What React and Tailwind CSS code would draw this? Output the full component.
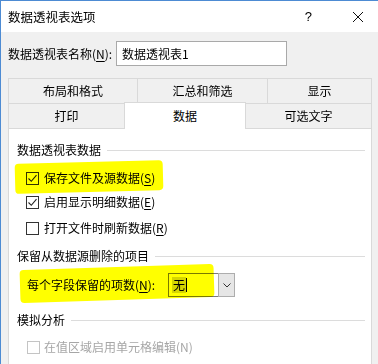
import React from 'react';

const Check = ({ checked, disabled }) => (
  <span
    className={`w-[13px] h-[13px] border bg-white flex items-center justify-center shrink-0 ${
      disabled ? 'border-[#c4c4c4]' : 'border-[#333333]'
    }`}
  >
    {checked && (
      <svg width="11" height="11" viewBox="0 0 11 11">
        <path d="M1.5 5.5 L4.3 8.3 L9.5 2.2" fill="none" stroke="#222" strokeWidth="1.1" />
      </svg>
    )}
  </span>
);

const U = ({ children }) => <span className="underline underline-offset-2">{children}</span>;

const GroupHeader = ({ children, className = '' }) => (
  <div className={`flex items-center gap-[6px] pr-[6px] ${className}`}>
    <span className="text-black whitespace-nowrap">{children}</span>
    <div className="flex-1 h-px bg-[#dcdcdc]" />
  </div>
);

const Tab = ({ children, className = '' }) => (
  <div className={`flex items-center justify-center border-t border-l border-[#d9d9d9] bg-[#f0f0f0] text-black ${className}`}>
    {children}
  </div>
);

export default function App() {
  return (
    <div className="w-[378px] h-[364px] overflow-hidden bg-[#f0f0f0] border-l border-t border-[#4d8bd3] font-['Noto_Sans_CJK_SC',sans-serif] text-[12px] leading-[16px] text-black">
      {/* title bar */}
      <div className="h-[31px] bg-white flex items-center pl-[7px]">
        <span className="text-[12.5px]">数据透视表选项</span>
        <span className="ml-auto mr-[40px] text-[13px] font-['Liberation_Sans',sans-serif]">?</span>
        <svg width="12" height="12" viewBox="0 0 12 12" className="mr-[14px]">
          <path d="M1 1 L11 11 M11 1 L1 11" stroke="#111" strokeWidth="1" />
        </svg>
      </div>

      {/* name row */}
      <div className="flex items-center pl-[7px] mt-[9px] h-[25px]">
        <span className="w-[108px]">数据透视表名称(<U>N</U>):</span>
        <div className="w-[171px] h-[25px] bg-white border border-[#a9a9a9] flex items-center pl-[5px]">
          数据透视表1
        </div>
      </div>

      {/* tabs */}
      <div className="ml-[7px] w-[364px] mt-[12px]">
        <div className="flex h-[25px]">
          <Tab className="w-[129px]">布局和格式</Tab>
          <Tab className="w-[130px]">汇总和筛选</Tab>
          <Tab className="w-[105px] border-r">显示</Tab>
        </div>
        <div className="flex h-[25px] items-end">
          <Tab className="w-[116px] h-[25px]">打印</Tab>
          <div className="w-[122px] h-[27px] -mb-px relative z-10 bg-white border-t border-l border-r border-[#d9d9d9] flex items-center justify-center">
            数据
          </div>
          <Tab className="w-[126px] h-[25px] border-r border-l-0">可选文字</Tab>
        </div>

        {/* panel */}
        <div className="relative bg-white border-t border-l border-r border-[#d9d9d9] h-[240px] pl-[8px]">
          <GroupHeader className="h-[24px] mt-[9px]">数据透视表数据</GroupHeader>
          <div className="h-[32px] flex items-center gap-[5px] pl-[9px]">
            <Check checked />
            <span>保存文件及源数据(<U>S</U>)</span>
          </div>
          <div className="h-[16px] flex items-center gap-[5px] pl-[9px]">
            <Check checked />
            <span>启用显示明细数据(<U>E</U>)</span>
          </div>
          <div className="h-[36px] flex items-center gap-[5px] pl-[9px]">
            <Check />
            <span>打开文件时刷新数据(<U>R</U>)</span>
          </div>
          <GroupHeader className="h-[20px]">保留从数据源删除的项目</GroupHeader>
          <div className="h-[38px] flex items-center pl-[10px]">
            <span className="w-[141px]">每个字段保留的项数(<U>N</U>):</span>
            <div className="flex h-[24px]">
              <div className="w-[50px] bg-white border border-[#7a7a7a] border-r-0 flex items-center pl-[3px]">
                <span className="bg-[#d6d6d6] px-px">无</span>
                <span className="w-px h-[14px] bg-black" />
              </div>
              <div className="w-[17px] bg-[#e6e6e6] border border-[#adadad] flex items-center justify-center">
                <svg width="8" height="5" viewBox="0 0 8 5">
                  <path d="M0.5 0.5 L4 4 L7.5 0.5" fill="none" stroke="#333" strokeWidth="1" />
                </svg>
              </div>
            </div>
          </div>
          <GroupHeader className="h-[32px]">模拟分析</GroupHeader>
          <div className="h-[22px] flex items-center gap-[4px] pl-[10px] text-[#a6a6a6]">
            <Check disabled />
            <span>在值区域启用单元格编辑(N)</span>
          </div>

          {/* marker highlights */}
          <div className="absolute left-[6px] top-[33px] w-[148px] h-[30px] bg-[#ffff00] rounded-[4px] -rotate-[1.5deg] mix-blend-multiply pointer-events-none" />
          <div className="absolute left-[11px] top-[138px] w-[194px] h-[33px] bg-[#ffff00] rounded-[4px] -rotate-[1.8deg] mix-blend-multiply pointer-events-none" />
        </div>
      </div>
    </div>
  );
}
